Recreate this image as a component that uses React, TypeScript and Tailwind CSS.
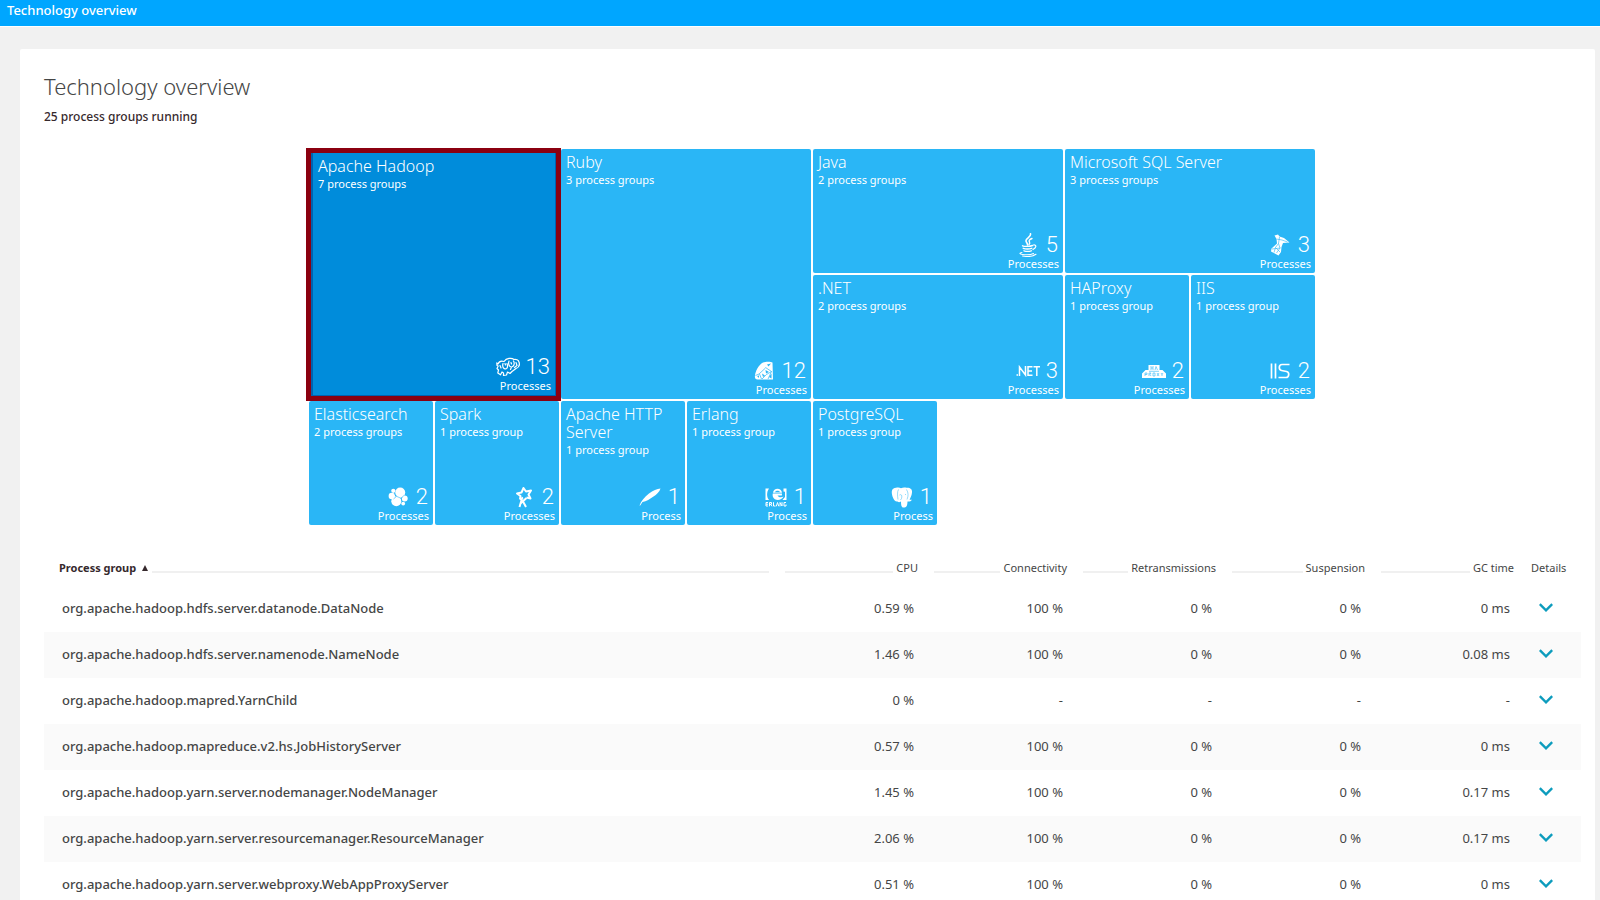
import type { ReactNode } from "react";

type Tile = {
  name: string;
  groups: string;
  count: number;
  icon: ReactNode;
  size: string;
  selected?: boolean;
};

const HadoopIcon = () => (
  <svg viewBox="0 0 24 20" className="w-6 h-5" fill="none" stroke="currentColor" strokeWidth="1.200" strokeLinejoin="round" strokeLinecap="round">
    <path d="M8 4.500C10.500 1 15.500 0.500 18 2.500C20 2 22.500 3 23 5C24 8 22.500 10.500 20 11.500L16 14.500M8 4.500C5 3.500 3 4.500 2 7L0.800 6L1 8.500L2.200 9L1 11.500L2.500 13L1.800 16L4.500 17.800L6 15L7.500 16L7.500 18.500L10.500 18L11.500 15L14 16.500L16 14.500" />
    <path d="M7 6.500C6 10 8 13 10.500 11.500C12 10.500 11.500 8 11 6.500M13 4C12 6.500 13 10 15.500 10C18 9.500 19 6.500 17.500 4M15.500 10L14.500 12.500M20 5.500L21 8.500L18.500 10.500M4 8.500L5 11" />
    <path d="M9 6.500L9.500 8M15 5.500L15.500 7" />
  </svg>
);

const RubyIcon = () => (
  <svg viewBox="0 0 20 20" className="size-5" fill="currentColor">
    <path d="M9 1.500C11.500 0.500 17 0.500 18.500 1.500L19 18.500H3.500C1.500 18.500 0.500 17 1 14.500C1.500 10 4.500 4 9 1.500Z" />
    <path d="M11.500 6.500L17.500 10.500M11.500 7L5 13L1.500 14.500M5.500 13L7.500 18M12.500 13.500L17.500 10.500L14 18M12.500 13.500L8 18" fill="none" stroke="#2ab6f6" strokeWidth="0.700" />
    <path d="M13 3.500L17 2.500L14.500 5.500ZM11.500 9L15 11L12 12.500ZM8 12.500L11 14.500L9 16ZM15 16L17.500 12.500V17.500ZM3 15L5 14.500L5 17Z" fill="#2ab6f6" />
  </svg>
);

const JavaIcon = () => (
  <svg viewBox="0 0 18 24" className="w-[18px] h-6" fill="none" stroke="currentColor" strokeLinecap="round">
    <path d="M11.500 0.800C12.500 4 6.500 5.500 7 8C7.200 9.500 8.800 10.500 8.500 12" strokeWidth="1.600" />
    <path d="M13 5.500C10.500 6.500 9.500 7.500 10.500 9C11 10 10.500 11 10 11.500" strokeWidth="1.400" />
    <path d="M3.500 12.800C6 13.800 11 13.500 13.500 12.500M4.200 15.300C7 16.300 10.500 16 12.800 15.300M5 17.800C7.500 18.700 10 18.500 12.300 17.800" strokeWidth="1.400" />
    <path d="M14.500 12C17.500 11.500 18 14.500 14 16.500" strokeWidth="1.200" />
    <path d="M3 19.500C0 20 0.500 21.300 3.500 21.500C7.500 22 12 21.800 14.500 20.500M3.500 23C8 23.800 14 23.500 17 21.300" strokeWidth="1.100" />
  </svg>
);

const SqlServerIcon = () => (
  <svg viewBox="0 0 20 22" className="w-5 h-[22px]">
    <path d="M4.500 1.500L8 0.500L9.500 2.500L14 4L19.500 8.500L13 9L11.500 13L11 18L8.500 21.500L1 17.500L1.500 14.500L7 9.500L6.500 5Z" fill="currentColor" />
    <path d="M6.500 5L12 6L17.500 8M9.500 3L8.500 9.500L5.500 13.500L4 18.500M2 15L10.500 14M5.500 13.500L10 18M8.500 9.500L10 14L6.500 19" fill="none" stroke="#2ab6f6" strokeWidth="0.600" />
  </svg>
);

const NetIcon = () => (
  <svg viewBox="0 0 24 12" className="w-6 h-3" fill="none" stroke="currentColor" strokeWidth="1.500">
    <path d="M0.500 10H2M3.500 11V2L9.500 10V1M16.500 1.800H12V10.200H16.500M12 6H16M17.500 1.800H24M20.800 1.800V11" />
  </svg>
);

const HaproxyIcon = () => (
  <svg viewBox="0 0 24 13" className="w-6 h-[13px]">
    <path d="M6.500 0H17.500V5H20.500L24 8.500V13H0V8.500L3.500 5H6.500Z" fill="currentColor" />
    <path d="M9 1V5M11 1V5M9 3H11M13 5L14 1.500L15.500 5M7 6.300H17M3 11V8H5V9.500H3M7 11V8H9L8 9.500L9 11M11 8V11H13V8ZM15 8L17 11M17 8L15 11M19 8L20 9.500L21 8M20 9.500V11" fill="none" stroke="#2ab6f6" strokeWidth="0.600" />
  </svg>
);

const IisIcon = () => (
  <svg viewBox="0 0 20 16" className="w-5 h-4" fill="none" stroke="currentColor" strokeWidth="1.700">
    <path d="M1.500 0.500V15.500M5.500 0.500V15.500M19.500 1.500H12C8.500 1.500 8.500 7 11.500 7.500L16.500 8.500C20 9.500 19 14.500 16 14.500H8.500" />
  </svg>
);

const ElasticIcon = () => (
  <svg viewBox="0 0 20 20" className="size-5" fill="currentColor">
    <circle cx="12.200" cy="5.600" r="5" />
    <circle cx="8.300" cy="14.200" r="5" />
    <circle cx="3.800" cy="9" r="3.200" />
    <circle cx="16.700" cy="11.500" r="3" />
    <circle cx="5.300" cy="3.800" r="2.100" />
    <circle cx="15.200" cy="16.600" r="1.900" />
    <circle cx="11" cy="10" r="2" />
    <path d="M6.500 7L8.500 9.300L13.500 11.500L13.600 13.500M8.500 9.300L5.500 12M13.500 11.500L15.500 8.500" fill="none" stroke="#2ab6f6" strokeWidth="0.600" />
  </svg>
);

const SparkIcon = () => (
  <svg viewBox="0 0 18 22" className="w-[18px] h-[22px]" fill="none" stroke="currentColor" strokeWidth="2" strokeLinejoin="round">
    <path d="M5 13.500L5.500 10L2 7.500L6.500 6.500L8.500 2L11 5.500L16 4.500L13.500 8.500L15.500 12.500L11.500 11.500" />
    <path d="M5 13.500L8 11.500M4.500 21L7 12.500M5.500 17.500L11.500 12M8 15.500L11 21" />
  </svg>
);

const FeatherIcon = () => (
  <svg viewBox="0 0 22 18" className="w-[22px] h-[18px]" fill="currentColor">
    <path d="M0.500 17.500C2 13 5.500 9 10 5.500C14 2.500 18 1 21.500 0.500C20.500 4 17.500 6.500 14.500 8.500C11 11 7.500 13.500 3.500 14L1.200 17.500Z" />
  </svg>
);

const ErlangIcon = () => (
  <svg viewBox="0 0 22 19" className="w-[22px] h-[19px]" fill="none" stroke="currentColor">
    <path d="M0.500 0.500H4C1.500 4 1.500 9 4 12H0.500ZM21.500 0.500H18.500V3.500L20 3.800V9L17.500 12H21.500Z" fill="currentColor" stroke="none" />
    <path d="M8 4.800C8.500 -0.500 16.500 -0.500 17 4.800ZM7.800 5.500H17C17 6 17 7 16.800 7.500H12.500C14 10 17 9.500 18.500 8.500C16.500 13 9.500 13 8 9C7.500 8 7.600 6.500 7.800 5.500Z" fill="currentColor" stroke="none" />
    <path d="M10 4.200C10.500 2.200 14.500 2.200 15 4.200Z" fill="#2ab6f6" stroke="none" />
    <path d="M3 14.500H1V18H3M1 16.200H3M4.500 18.300V14.500H6.500V16.300H4.500M5.500 16.300L7 18.300M8.500 14.200V18H10.500M11.300 18.300L12.500 14.500L13.800 18.300M15 18.300V14.500L17 18V14.200M21 14.500H19V18H21V16.500" strokeWidth="1" />
  </svg>
);

const PostgresIcon = () => (
  <svg viewBox="0 0 22 21" className="w-[22px] h-[21px]">
    <path d="M5 0.800C7 0.300 9 0.600 10 1.200C12 0.300 14 0.500 15.500 0.800C19 0.500 21.500 2 21 5.500C20.700 8.500 19.500 11 18.500 12.500C19.500 12.800 20.500 12.500 21 12.800C20 14.500 18 14.800 16.500 14.500C16.300 17 16.500 20 13.500 20.500C10.500 21 10 18.500 10 14.500C8.500 15.500 7.500 15.500 6.500 14.500C3 15.500 0.500 8 0.800 4.500C1 2 3 0.800 5 0.800Z" fill="currentColor" />
    <path d="M7.500 2.500C6 5 6.500 9 7 12.500M15.500 2.500C17.500 5.500 17.500 9 16 12.500M8.500 8C10 7 11.500 8 10.500 11.500L9.500 13M14 7L15 8" fill="none" stroke="#2ab6f6" strokeWidth="0.500" />
  </svg>
);

const tiles: Tile[] = [
  { name: "Apache Hadoop", groups: "7 process groups", count: 13, icon: <HadoopIcon />, size: "col-span-2 row-span-2", selected: true },
  { name: "Ruby", groups: "3 process groups", count: 12, icon: <RubyIcon />, size: "col-span-2 row-span-2" },
  { name: "Java", groups: "2 process groups", count: 5, icon: <JavaIcon />, size: "col-span-2" },
  { name: "Microsoft SQL Server", groups: "3 process groups", count: 3, icon: <SqlServerIcon />, size: "col-span-2" },
  { name: ".NET", groups: "2 process groups", count: 3, icon: <NetIcon />, size: "col-span-2" },
  { name: "HAProxy", groups: "1 process group", count: 2, icon: <HaproxyIcon />, size: "" },
  { name: "IIS", groups: "1 process group", count: 2, icon: <IisIcon />, size: "" },
  { name: "Elasticsearch", groups: "2 process groups", count: 2, icon: <ElasticIcon />, size: "" },
  { name: "Spark", groups: "1 process group", count: 2, icon: <SparkIcon />, size: "" },
  { name: "Apache HTTP Server", groups: "1 process group", count: 1, icon: <FeatherIcon />, size: "" },
  { name: "Erlang", groups: "1 process group", count: 1, icon: <ErlangIcon />, size: "" },
  { name: "PostgreSQL", groups: "1 process group", count: 1, icon: <PostgresIcon />, size: "" },
];

const columns = ["CPU", "Connectivity", "Retransmissions", "Suspension", "GC time"];

const rows = [
  ["org.apache.hadoop.hdfs.server.datanode.DataNode", "0.59 %", "100 %", "0 %", "0 %", "0 ms"],
  ["org.apache.hadoop.hdfs.server.namenode.NameNode", "1.46 %", "100 %", "0 %", "0 %", "0.08 ms"],
  ["org.apache.hadoop.mapred.YarnChild", "0 %", "-", "-", "-", "-"],
  ["org.apache.hadoop.mapreduce.v2.hs.JobHistoryServer", "0.57 %", "100 %", "0 %", "0 %", "0 ms"],
  ["org.apache.hadoop.yarn.server.nodemanager.NodeManager", "1.45 %", "100 %", "0 %", "0 %", "0.17 ms"],
  ["org.apache.hadoop.yarn.server.resourcemanager.ResourceManager", "2.06 %", "100 %", "0 %", "0 %", "0.17 ms"],
  ["org.apache.hadoop.yarn.server.webproxy.WebAppProxyServer", "0.51 %", "100 %", "0 %", "0 %", "0 ms"],
];

function TechTile({ tile }: { tile: Tile }) {
  return (
    <button
      type="button"
      className={`relative flex flex-col justify-between rounded-xs pl-[5px] pr-1 pt-1 pb-[2px] text-left text-white ${tile.size} ${
        tile.selected ? "border-4 border-[#0062b0] bg-[#008cdb]" : "bg-[#2ab6f6]"
      }`}
    >
      <span className="block">
        <span className="block text-base leading-[18px] font-light">{tile.name}</span>
        <span className="block text-[11px] leading-[18px]">{tile.groups}</span>
      </span>

      <span className="flex flex-col items-end">
        <span className="flex items-center gap-[6px] pr-px">
          <span className="w-6 flex justify-center">{tile.icon}</span>
          <span className="font-['Roboto',sans-serif] text-[22px] leading-6 font-light">{tile.count}</span>
        </span>
        <span className="text-[11px] leading-[14px]">{tile.count === 1 ? "Process" : "Processes"}</span>
      </span>

      {tile.selected && (
        <span className="absolute -left-[7px] -right-[6px] -top-[5px] -bottom-[6px] border-5 border-[#8b0010]" />
      )}
    </button>
  );
}

export default function App() {
  return (
    <div className="min-h-screen flex flex-col bg-[#f1f1f1] font-['Noto_Sans','Open_Sans',sans-serif] text-[#454646]">
      <header className="h-[27px] bg-[#00a6ff] border-b border-white px-[7px]">
        <p className="text-[13px] leading-5 font-medium text-white">Technology overview</p>
      </header>

      <main className="flex-1 mt-[22px] ml-5 mr-[5px] bg-white rounded-t-xs pl-6 pr-[14px] pt-6">
        <h1 className="text-[22px] leading-[26px] font-light">Technology overview</h1>
        <p className="mt-1 text-xs leading-7 font-medium text-[#36292d]">25 process groups running</p>

        <section className="mt-[18px] grid grid-cols-[repeat(8,124px)] auto-rows-[124px] gap-[2px] justify-center pr-px">
          {tiles.map((tile) => (
            <TechTile key={tile.name} tile={tile} />
          ))}
        </section>

        <table className="mt-[25px] w-full table-fixed border-collapse">
          <thead>
            <tr className="text-[11px]">
              <th scope="col" className="h-9 p-0 pl-[15px] pr-2 align-top text-left font-bold text-[#36292d]">
                <span className="flex items-center gap-1 leading-[35px]">
                  <button type="button" className="h-[35px] flex items-center gap-[6px]">
                    Process group
                    <svg viewBox="0 0 6 6" className="size-[6px]" fill="currentColor">
                      <path d="M3 0L6 6H0Z" />
                    </svg>
                  </button>
                  <span className="flex-1 mt-2 h-[2px] bg-[#f0f0f0]" />
                </span>
              </th>
              {columns.map((column) => (
                <th key={column} scope="col" className="w-[149px] h-9 p-0 px-2 align-top font-normal">
                  <span className="flex items-center gap-[3px] leading-[35px]">
                    <span className="flex-1 mt-2 h-[2px] bg-[#f0f0f0]" />
                    {column}
                  </span>
                </th>
              ))}
              <th scope="col" className="w-[59px] h-9 p-0 pl-[9px] align-top text-left font-normal leading-[35px]">
                Details
              </th>
            </tr>
          </thead>

          <tbody>
            {rows.map(([name, ...values]) => (
              <tr key={name} className="h-[46px] even:bg-[#fafafa] text-[13px]">
                <td className="p-0 pb-px pl-[18px] whitespace-nowrap font-medium">{name}</td>
                {values.map((value, i) => (
                  <td key={i} className="p-0 pb-px pr-3 text-right">{value}</td>
                ))}
                <td className="p-0 pb-[3px]">
                  <button type="button" aria-label="Show details" className="flex ml-[17px]">
                    <svg viewBox="0 0 14 10" className="w-[14px] h-[10px]" fill="none" stroke="#0d9cbd" strokeWidth="2.400">
                      <path d="M0.800 1.200L7 7.400L13.200 1.200" />
                    </svg>
                  </button>
                </td>
              </tr>
            ))}
          </tbody>
        </table>
      </main>
    </div>
  );
}
